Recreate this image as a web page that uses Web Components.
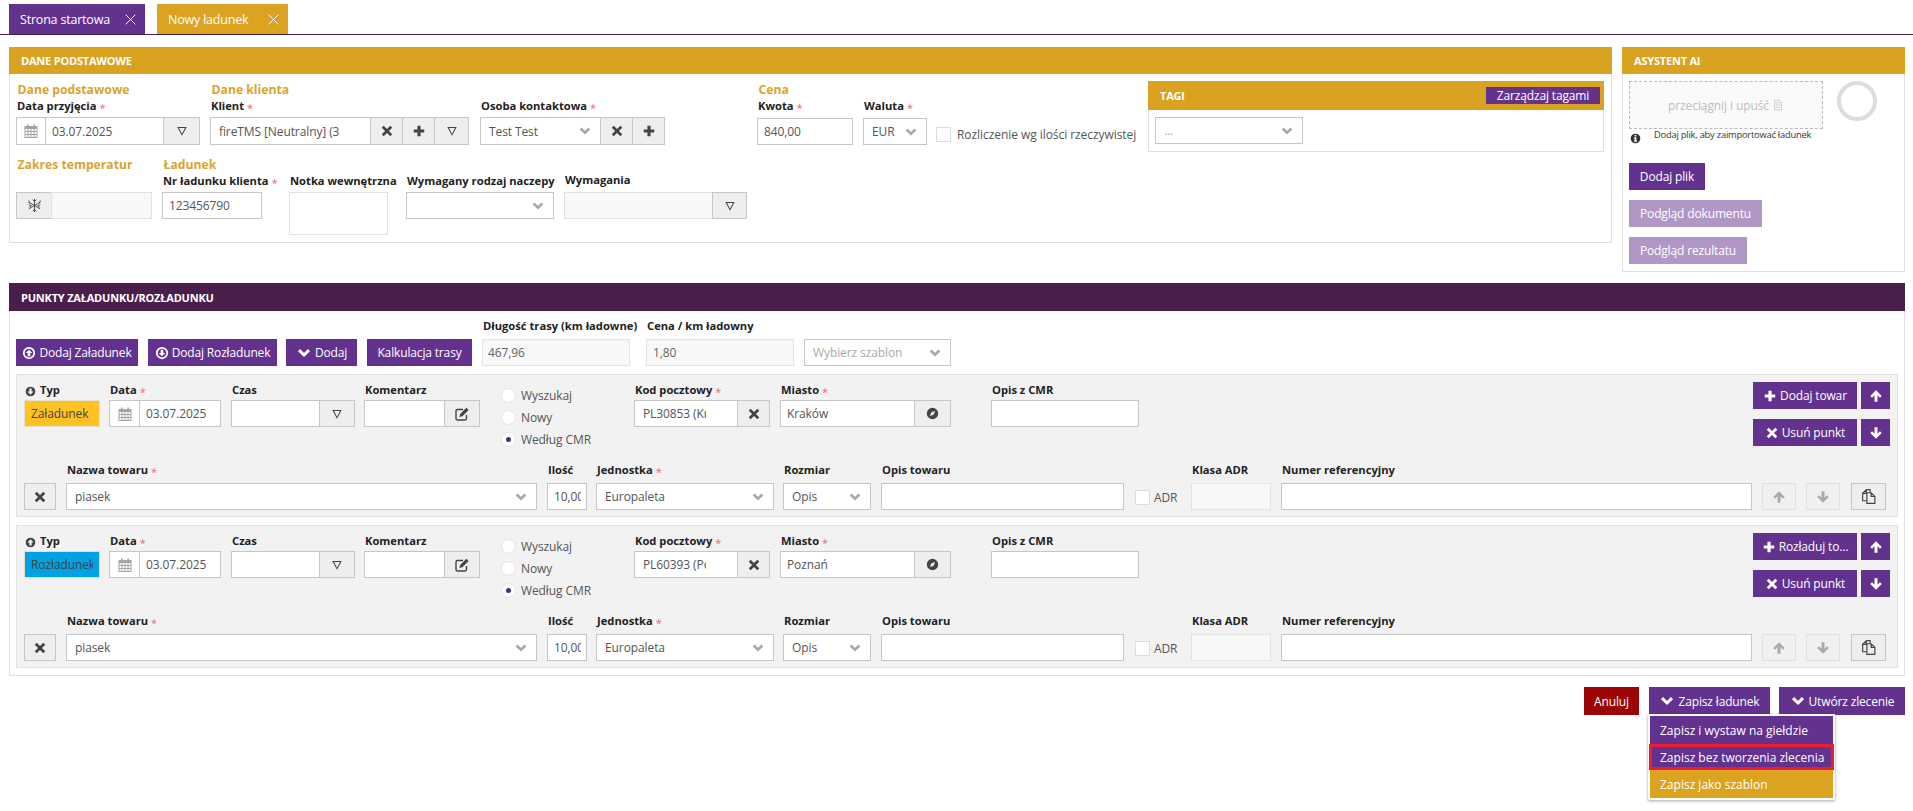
<!DOCTYPE html>
<html lang="pl">
<head>
<meta charset="utf-8">
<title>Nowy ładunek</title>
<style>
html, body { margin: 0; background: #fff; font-family: "Open Sans", "Liberation Sans", sans-serif; }
</style>
</head>
<body>
<tms-app></tms-app>
<script>
const ICONS = {
    times: '<path d="M4.2 2 8 5.8 11.8 2 14 4.2 10.2 8 14 11.8 11.8 14 8 10.2 4.2 14 2 11.8 5.8 8 2 4.2z"/>',
    plus: '<path d="M6.200 2h3.600v4.200H14v3.600H9.800V14H6.200V9.800H2V6.200h4.200z"/>',
    chevron: '<path d="M3 5.200 8 10l5-4.800" fill="none" stroke="currentColor" stroke-width="3"/>',
    filter: '<path d="M2.600 3.400h10.800L8 13.400zM4.600 4.600 8 11l3.400-6.400z" fill-rule="evenodd"/>',
    calendar: '<path fill-rule="evenodd" d="M1.500 3H4V1.500h1.500V3h5V1.500H12V3h2.500v12h-13zM2.500 6v2h2V6zm3 0v2h2V6zm3 0v2h2V6zm3 0v2h2V6zm-9 3v2h2V9zm3 0v2h2V9zm3 0v2h2V9zm3 0v2h2V9zm-9 3v2h2v-2zm3 0v2h2v-2zm3 0v2h2v-2zm3 0v2h2v-2z"/>',
    snow: '<path d="M8 1v14M2 4.500l12 7M14 4.500l-12 7M6 1.800l2 2 2-2M6 14.200l2-2 2 2M1.800 7.300l2.700.8-2 2M14.200 7.300l-2.700.8 2 2M1.800 2.700l.8 3M14.200 2.700l-.8 3" fill="none" stroke="currentColor" stroke-width="1"/>',
    edit: '<path d="M12.500 9v3.500a1.500 1.500 0 0 1-1.500 1.500H3.500A1.500 1.500 0 0 1 2 12.500V5a1.500 1.500 0 0 1 1.500-1.500H9" fill="none" stroke="currentColor" stroke-width="1.400"/><path d="M12.300 1.800 14.600 4l-6.200 6.200-3 .8.800-3z"/>',
    compass: '<path fill-rule="evenodd" d="M8 1a7 7 0 1 0 0 14A7 7 0 0 0 8 1zM11.200 4.800 9.400 9.400 4.800 11.200 6.600 6.600z"/>',
    up: '<path d="M8 1.500 14.500 8l-2 2L9.700 7.200V14.500H6.300V7.200L3.500 10l-2-2z"/>',
    down: '<path d="M8 14.500 14.500 8l-2-2L9.700 8.800V1.500H6.300v7.300L3.500 6l-2 2z"/>',
    copy: '<path d="M6 1.500 2.500 5v7H6M6 1.500V5H2.500M6 1.500h3.500V4.500M6.500 4.500h4L14 8v6.500H6.500zM10.500 4.500V8H14" fill="none" stroke="currentColor" stroke-width="1.100"/>',
    info: '<path fill-rule="evenodd" d="M8 1a7 7 0 1 0 0 14A7 7 0 0 0 8 1zM6.700 3h2.600v2.200H6.700zM5.800 6.300h3.500v4.700h1v1.600H5.800V11h1V7.900h-1z"/>',
    circleup: '<path fill-rule="evenodd" d="M8 1a7 7 0 1 0 0 14A7 7 0 0 0 8 1zM8 3a5 5 0 1 1 0 10A5 5 0 0 1 8 3zM8 4.200 11.800 8H9.500v3.600h-3V8H4.200z"/>',
    circledown: '<path fill-rule="evenodd" d="M8 15a7 7 0 1 0 0-14A7 7 0 0 0 8 15zM8 13a5 5 0 1 1 0-10A5 5 0 0 1 8 13zM8 11.800 11.800 8H9.500V4.400h-3V8H4.200z"/>',
    discup: '<path fill-rule="evenodd" d="M8 1a7 7 0 1 0 0 14A7 7 0 0 0 8 1zM8 3.400 12.400 8H9.600v4.400H6.400V8H3.600z"/>',
    discdown: '<path fill-rule="evenodd" d="M8 15a7 7 0 1 0 0-14A7 7 0 0 0 8 15zM8 12.600 12.400 8H9.600V3.600H6.400V8H3.600z"/>',
    file: '<path d="M3.500 1.500h6l3 3v10h-9zM5 5h6M5 8h6M5 11h6" fill="none" stroke="currentColor" stroke-width="1"/>',
    close: '<path d="M2 2l12 12M14 2 2 14" fill="none" stroke="currentColor" stroke-width="1.200"/>'
}

class Base extends HTMLElement {
    constructor() {
        super()
        this.attachShadow({mode: 'open'})
    }
    attr(name, def = '') { return this.hasAttribute(name) ? this.getAttribute(name) : def }
}

customElements.define('tms-icon', class extends Base {
    connectedCallback() {
        let s = this.attr('size', 12)
        this.shadowRoot.innerHTML = `
<style>
:host { display: inline-flex; flex: none; width: ${s}px; height: ${s}px; }
svg { width: 100%; height: 100%; fill: currentColor; display: block; }
</style>
<svg viewBox="0 0 16 16">${ICONS[this.attr('name')] || ''}</svg>`
    }
})

customElements.define('tms-tab', class extends Base {
    connectedCallback() {
        this.shadowRoot.innerHTML = `
<style>
:host { display: flex; align-items: center; justify-content: space-between; box-sizing: border-box;
  width: ${this.attr('w')}px; height: 30px; padding: 0 8px 0 11px; color: #fff; font-size: 12.500px;
  background: ${this.attr('color', '#63328f')}; letter-spacing: -.2px; }
</style>
<slot></slot><tms-icon name="close" size="13"></tms-icon>`
    }
})

customElements.define('tms-panel', class extends Base {
    connectedCallback() {
        let h = this.attr('h'), hh = this.attr('hh', 27)
        this.shadowRoot.innerHTML = `
<style>
:host { display: flex; flex-direction: column; box-sizing: border-box; flex: none;
  width: ${this.attr('w')}px; ${h ? `height: ${h}px;` : ''} }
header { display: flex; align-items: center; justify-content: space-between; box-sizing: border-box; flex: none;
  height: ${hh}px; padding: 0 4px 0 12px; background: ${this.attr('color', '#d9a220')}; color: #fff;
  font-size: 11px; font-weight: 700; letter-spacing: -.2px; }
header span { text-transform: uppercase; }
main { flex: 1; border: 1px solid #e3dfe0; border-top: 0; padding: ${this.attr('pad', '7px 6px')}; }
</style>
<header><span>${this.attr('heading')}</span><slot name="actions"></slot></header>
<main><slot></slot></main>`
    }
})

customElements.define('tms-field', class extends Base {
    connectedCallback() {
        let ml = this.attr('ml', 0)
        let head = this.attr('head'), label = this.attr('label')
        this.shadowRoot.innerHTML = `
<style>
:host { display: block; flex: none; width: ${this.attr('w')}px; margin-left: ${ml}px; }
.head { height: var(--head-h, 0); line-height: 16px; font-size: 12.200px; font-weight: 700; color: #dba42c;
  white-space: nowrap; padding-left: 1.500px; }
.label { display: flex; height: var(--label-h, 19px); line-height: 16px; font-size: 11.200px; font-weight: 700;
  color: #222; white-space: nowrap; padding-left: 1px; }
.req { color: #f0666e; font-size: 11px; font-weight: 400; margin-left: 3px; position: relative; top: 2px; }
</style>
<div class="head">${head}</div>
<div class="label"><slot name="pre"></slot>${label}${this.hasAttribute('req') ? '<span class="req">*</span>' : ''}</div>
<slot></slot>`
    }
})

customElements.define('tms-group', class extends Base {
    connectedCallback() {
        this.shadowRoot.innerHTML = `
<style>
:host { display: flex; height: var(--ch, 27px); }
::slotted(:not(:first-child)) { margin-left: -1px; }
</style>
<slot></slot>`
    }
})

customElements.define('tms-input', class extends Base {
    connectedCallback() {
        let off = this.hasAttribute('disabled')
        let w = this.attr('w'), h = this.attr('h'), pr = this.attr('pr', 8), pl = this.attr('pl', 8)
        this.shadowRoot.innerHTML = `
<style>
:host { display: flex; align-items: ${h ? 'flex-start' : 'center'}; box-sizing: border-box; min-width: 0;
  ${w ? `width: ${w}px; flex: none;` : 'flex: 1;'}
  height: ${h ? h + 'px' : 'var(--ch, 27px)'}; padding: 0 ${pr}px 0 ${pl}px;
  background: ${off ? '#f8f8f8' : '#fff'}; border: 1px solid ${off || h ? '#e2e2e2' : '#c6c6c6'};
  color: ${off ? '#666' : '#555'}; font-size: 12px; letter-spacing: -.1px; }
div { overflow: hidden; white-space: nowrap; width: 100%; }
</style>
<div>${this.attr('value')}</div>`
    }
})

customElements.define('tms-select', class extends Base {
    connectedCallback() {
        let w = this.attr('w')
        this.shadowRoot.innerHTML = `
<style>
:host { display: flex; align-items: center; justify-content: space-between; box-sizing: border-box; min-width: 0;
  ${w ? `width: ${w}px; flex: none;` : 'flex: 1;'}
  height: var(--ch, 27px); padding: 0 8px; background: #fff; border: 1px solid #c6c6c6;
  color: ${this.attr('tone', '#555')}; font-size: 12px; letter-spacing: -.1px; white-space: nowrap; }
tms-icon { color: #a8a8a8; }
</style>
<span>${this.attr('value')}</span><tms-icon name="chevron" size="14"></tms-icon>`
    }
})

customElements.define('tms-addon', class extends Base {
    connectedCallback() {
        let off = this.hasAttribute('disabled'), plain = this.hasAttribute('plain')
        this.shadowRoot.innerHTML = `
<style>
:host { display: inline-flex; align-items: center; justify-content: center; box-sizing: border-box; flex: none;
  width: ${this.attr('w', 32)}px; margin-left: ${this.attr('ml', 0)}px; height: var(--ch, 27px);
  background: ${plain ? '#fff' : off ? '#f0f0f0' : '#eee'};
  border: 1px solid ${off ? '#e0e0e0' : '#c6c6c6'};
  color: ${plain ? '#a4a4a4' : off ? '#aaa' : '#444'}; }
</style>
<tms-icon name="${this.attr('icon')}" size="${this.attr('size', 14)}"></tms-icon>`
    }
})

customElements.define('tms-btn', class extends Base {
    connectedCallback() {
        let icon = this.attr('icon')
        this.shadowRoot.innerHTML = `
<style>
:host { display: inline-flex; align-items: center; justify-content: center; gap: 3px; box-sizing: border-box; flex: none;
  width: ${this.attr('w')}px; margin-left: ${this.attr('ml', 0)}px; height: var(--bh, 27px);
  background: ${this.attr('color', this.hasAttribute('light') ? '#b097c6' : '#63328f')};
  color: #fff; font-size: 12px; font-weight: 400; white-space: nowrap; letter-spacing: -.15px; }
</style>
${icon ? `<tms-icon name="${icon}" size="${this.attr('size', 14)}"></tms-icon>` : ''}<slot></slot>`
    }
})

customElements.define('tms-check', class extends Base {
    connectedCallback() {
        this.shadowRoot.innerHTML = `
<style>
:host { display: flex; align-items: center; gap: ${this.attr('gap', 4)}px; flex: none; width: ${this.attr('w')}px;
  margin-left: ${this.attr('ml', 0)}px; margin-top: ${this.attr('mt', 0)}px;
  color: #555; font-size: 12px; letter-spacing: ${this.attr('ls', '-.1')}px; white-space: nowrap; }
i { display: block; box-sizing: border-box; width: 15px; height: 15px; background: #fff; border: 1px solid #ddd; flex: none; }
</style>
<i></i><slot></slot>`
    }
})

customElements.define('tms-radio', class extends Base {
    connectedCallback() {
        let on = this.hasAttribute('checked')
        this.shadowRoot.innerHTML = `
<style>
:host { display: flex; align-items: center; gap: 5px; height: 22px; color: #555; font-size: 12px; letter-spacing: -.1px; white-space: nowrap; }
i { display: flex; align-items: center; justify-content: center; box-sizing: border-box; width: 15px; height: 15px;
  border-radius: 50%; background: #fff; border: 1px solid #e4e4e4; flex: none; }
b { width: 5px; height: 5px; border-radius: 50%; background: #4f2a84; }
</style>
<i>${on ? '<b></b>' : ''}</i><slot></slot>`
    }
})

customElements.define('tms-point', class extends Base {
    connectedCallback() {
        let kind = this.attr('kind')
        this.shadowRoot.innerHTML = `
<style>
:host { display: block; box-sizing: border-box; height: 143px; padding: 7px 7px 6px; background: #f3f2f2; border: 1px solid #e3dfe0; }
.a, .b { display: flex; align-items: flex-start; }
.a { --label-h: 18px; height: 64px; }
.b { --label-h: 21px; margin-top: 16px; }
.typ { box-sizing: border-box; display: flex; align-items: center; width: 76px; height: 27px; padding: 0 6px;
  background: ${this.attr('typ-color')}; border: 1px solid #e6e0d0; color: #444; font-size: 12px; letter-spacing: -.1px; white-space: nowrap; }
.typ span { display: block; width: 62px; overflow: hidden; }
.radios { margin: 2px 0 0 21px; width: 133px; flex: none; }
.actions { display: grid; grid-template-columns: 104px 29px; gap: 10px 4px; margin-left: auto; }
.low { margin-top: 21px; }
</style>
<div class="a">
  <tms-field w="76" label="Typ">
    <tms-icon slot="pre" name="${this.attr('turn')}" size="11" style="margin:4px 4px 0 0;color:#444"></tms-icon>
    <div class="typ"><span>${kind}</span></div>
  </tms-field>
  <tms-field w="112" ml="9" label="Data" req>
    <tms-group><tms-addon plain w="31" icon="calendar" size="16"></tms-addon><tms-input value="03.07.2025" pl="6"></tms-input></tms-group>
  </tms-field>
  <tms-field w="124" ml="10" label="Czas">
    <tms-group><tms-input></tms-input><tms-addon w="36" icon="filter"></tms-addon></tms-group>
  </tms-field>
  <tms-field w="116" ml="9" label="Komentarz">
    <tms-group><tms-input></tms-input><tms-addon w="36" icon="edit" size="16"></tms-addon></tms-group>
  </tms-field>
  <div class="radios">
    <tms-radio>Wyszukaj</tms-radio>
    <tms-radio>Nowy</tms-radio>
    <tms-radio checked>Według CMR</tms-radio>
  </div>
  <tms-field w="136" label="Kod pocztowy" req>
    <tms-group><tms-input value="${this.attr('zip')}" pr="31"></tms-input><tms-addon w="33" icon="times"></tms-addon></tms-group>
  </tms-field>
  <tms-field w="171" ml="10" label="Miasto" req>
    <tms-group><tms-input value="${this.attr('city')}" pl="6"></tms-input><tms-addon w="37" icon="compass" size="13"></tms-addon></tms-group>
  </tms-field>
  <tms-field w="148" ml="40" label="Opis z CMR"><tms-input></tms-input></tms-field>
  <div class="actions">
    <tms-btn w="104" icon="plus">${this.attr('add')}</tms-btn>
    <tms-btn w="29" icon="up"></tms-btn>
    <tms-btn w="104" icon="times">Usuń punkt</tms-btn>
    <tms-btn w="29" icon="down"></tms-btn>
  </div>
</div>
<div class="b">
  <tms-addon class="low" w="32" icon="times"></tms-addon>
  <tms-field w="471" ml="10" label="Nazwa towaru" req><tms-select value="piasek"></tms-select></tms-field>
  <tms-field w="40" ml="10" label="Ilość"><tms-input value="10,00" pl="6" pr="5"></tms-input></tms-field>
  <tms-field w="178" ml="9" label="Jednostka" req><tms-select value="Europaleta"></tms-select></tms-field>
  <tms-field w="88" ml="9" label="Rozmiar"><tms-select value="Opis"></tms-select></tms-field>
  <tms-field w="243" ml="10" label="Opis towaru"><tms-input></tms-input></tms-field>
  <tms-check w="46" ml="11" mt="27">ADR</tms-check>
  <tms-field w="80" ml="10" label="Klasa ADR"><tms-input disabled></tms-input></tms-field>
  <tms-field w="471" ml="10" label="Numer referencyjny"><tms-input></tms-input></tms-field>
  <tms-addon class="low" w="34" ml="10" disabled icon="up"></tms-addon>
  <tms-addon class="low" w="34" ml="10" disabled icon="down"></tms-addon>
  <tms-addon class="low" w="35" ml="11" icon="copy" size="17"></tms-addon>
</div>`
    }
})

customElements.define('tms-app', class extends Base {
    connectedCallback() {
        this.shadowRoot.innerHTML = `
<style>
:host { display: block; height: 811px; overflow: hidden; }
.tabs { display: flex; gap: 12px; padding: 4px 0 0 9px; border-bottom: 1px solid #4a1e4b; }
.top { display: flex; align-items: flex-start; gap: 10px; padding: 12px 8px 0 9px; }
.r1 { display: flex; align-items: flex-start; --head-h: 16px; --ch: 28px; margin-top: 1px; }
.r2 { display: flex; align-items: flex-start; --head-h: 16px; margin-top: 7px; }
.tags { margin-left: 0; margin-top: -1px; }
.hint { display: flex; align-items: flex-start; width: 220px; height: 33px; color: #333; font-size: 9.300px; line-height: 12px; letter-spacing: -.2px; }
.hint tms-icon { margin: 4px 13px 0 1px; color: #333; }
.drop { display: flex; align-items: center; justify-content: center; gap: 3px; box-sizing: border-box; width: 194px; height: 48px;
  background: #fafafa; border: 1px dashed #bbb; color: #bdbdbd; font-size: 12px; letter-spacing: -.1px; }
.ai { display: flex; align-items: flex-start; }
.ring { box-sizing: border-box; width: 40px; height: 40px; margin-left: 14px; border: 4px solid #ddd; border-radius: 50%; }
.stack { display: flex; flex-direction: column; align-items: flex-start; gap: 10px; margin-top: 1px; }
.points { margin: 13px 8px 0 9px; }
.bar { display: flex; align-items: flex-end; margin-bottom: 8px; --label-h: 21px; }
.list { display: flex; flex-direction: column; gap: 8px; }
.foot { display: flex; justify-content: flex-end; padding: 13px 8px 0 0; --bh: 28px; }
.save { position: relative; margin-left: 10px; }
.menu { position: absolute; top: 27px; left: -1px; box-sizing: border-box; width: 187px; padding: 2px; background: #fff;
  box-shadow: 0 1px 3px rgba(0,0,0,.35); z-index: 2; color: #fff; font-size: 12px; }
.menu div { display: flex; align-items: center; height: 28px; padding-left: 10px; background: #63328f; white-space: nowrap; }
.menu div.hot { height: 26px; margin: 0 -1px; outline: 3px solid #ed1c2e; outline-offset: -3px; padding-left: 11px; }
.menu div.gold { height: 28px; background: #dba320; }
</style>
<div class="tabs">
  <tms-tab w="136">Strona startowa</tms-tab>
  <tms-tab w="131" color="#dba320">Nowy ładunek</tms-tab>
</div>
<div class="top">
  <tms-panel w="1603" h="196" heading="Dane podstawowe">
    <div class="r1">
      <tms-field w="184" head="Dane podstawowe" label="Data przyjęcia" req>
        <tms-group><tms-addon plain w="30" icon="calendar" size="16"></tms-addon><tms-input value="03.07.2025" pl="6"></tms-input><tms-addon w="37" icon="filter"></tms-addon></tms-group>
      </tms-field>
      <tms-field w="259" ml="10" head="Dane klienta" label="Klient" req>
        <tms-group><tms-input value="fireTMS [Neutralny] (3" pr="30"></tms-input><tms-addon w="33" icon="times"></tms-addon><tms-addon w="33" icon="plus"></tms-addon><tms-addon w="35" icon="filter"></tms-addon></tms-group>
      </tms-field>
      <tms-field w="185" ml="11" label="Osoba kontaktowa" req>
        <tms-group><tms-select value="Test Test"></tms-select><tms-addon w="33" icon="times"></tms-addon><tms-addon w="33" icon="plus"></tms-addon></tms-group>
      </tms-field>
      <tms-field w="96" ml="92" head="Cena" label="Kwota" req><tms-input value="840,00" pl="6" style="--ch:27px;margin-top:1px"></tms-input></tms-field>
      <tms-field w="64" ml="10" label="Waluta" req><tms-select value="EUR" style="--ch:27px;margin-top:1px"></tms-select></tms-field>
      <tms-check w="212" ml="9" mt="44" gap="6" ls="-.06">Rozliczenie wg ilości rzeczywistej</tms-check>
      <tms-panel class="tags" w="456" h="69" hh="29" heading="Tagi" pad="7px 6px">
        <tms-btn slot="actions" w="114" style="--bh:17px">Zarządzaj tagami</tms-btn>
        <tms-select w="148" value="..." tone="#aaa" style="--ch:27px"></tms-select>
      </tms-panel>
    </div>
    <div class="r2">
      <tms-field w="136" head="Zakres temperatur">
        <tms-group><tms-addon w="36" icon="snow" size="15"></tms-addon><tms-input disabled></tms-input></tms-group>
      </tms-field>
      <tms-field w="100" ml="10" head="Ładunek" label="Nr ładunku klienta" req><tms-input value="123456790" pl="6"></tms-input></tms-field>
      <tms-field w="99" ml="27" label="Notka wewnętrzna"><tms-input h="43"></tms-input></tms-field>
      <tms-field w="148" ml="18" label="Wymagany rodzaj naczepy"><tms-select></tms-select></tms-field>
      <tms-field w="183" ml="10" label="Wymagania" style="--label-h:20px;margin-top:-1px">
        <tms-group><tms-input disabled></tms-input><tms-addon w="35" icon="filter"></tms-addon></tms-group>
      </tms-field>
    </div>
  </tms-panel>
  <tms-panel w="283" h="223" heading="Asystent AI">
    <div class="ai">
      <div class="drop">przeciągnij i upuść <tms-icon name="file" size="12"></tms-icon></div>
      <div class="ring"></div>
    </div>
    <div class="hint"><tms-icon name="info" size="11"></tms-icon><span>Dodaj plik, aby zaimportować ładunek</span></div>
    <div class="stack">
      <tms-btn w="76">Dodaj plik</tms-btn>
      <tms-btn w="133" light>Podgląd dokumentu</tms-btn>
      <tms-btn w="118" light>Podgląd rezultatu</tms-btn>
    </div>
  </tms-panel>
</div>
<div class="points">
  <tms-panel h="391" w="1896" hh="28" color="#4a1e4b" heading="Punkty załadunku/rozładunku">
    <div class="bar">
      <tms-btn w="122" icon="circleup">Dodaj Załadunek</tms-btn>
      <tms-btn w="129" ml="10" icon="circledown">Dodaj Rozładunek</tms-btn>
      <tms-btn w="71" ml="9" icon="chevron" size="16">Dodaj</tms-btn>
      <tms-btn w="105" ml="10">Kalkulacja trasy</tms-btn>
      <tms-field w="148" ml="10" label="Długość trasy (km ładowne)"><tms-input disabled value="467,96" pl="5"></tms-input></tms-field>
      <tms-field w="148" ml="16" label="Cena / km ładowny"><tms-input disabled value="1,80" pl="6"></tms-input></tms-field>
      <tms-select w="147" value="Wybierz szablon" tone="#aaa" style="margin-left:10px"></tms-select>
    </div>
    <div class="list">
      <tms-point kind="Załadunek" typ-color="#ffc222" turn="discdown" zip="PL30853 (Kr" city="Kraków" add="Dodaj towar"></tms-point>
      <tms-point kind="Rozładunek" typ-color="#00a2e3" turn="discup" zip="PL60393 (Po" city="Poznań" add="Rozładuj to..."></tms-point>
    </div>
  </tms-panel>
</div>
<div class="foot">
  <tms-btn w="55" color="#9c0505">Anuluj</tms-btn>
  <div class="save">
    <tms-btn w="121" icon="chevron" size="16">Zapisz ładunek</tms-btn>
    <div class="menu">
      <div>Zapisz i wystaw na giełdzie</div>
      <div class="hot">Zapisz bez tworzenia zlecenia</div>
      <div class="gold">Zapisz jako szablon</div>
    </div>
  </div>
  <tms-btn w="126" ml="9" icon="chevron" size="16">Utwórz zlecenie</tms-btn>
</div>`
    }
})
</script>
</body>
</html>
